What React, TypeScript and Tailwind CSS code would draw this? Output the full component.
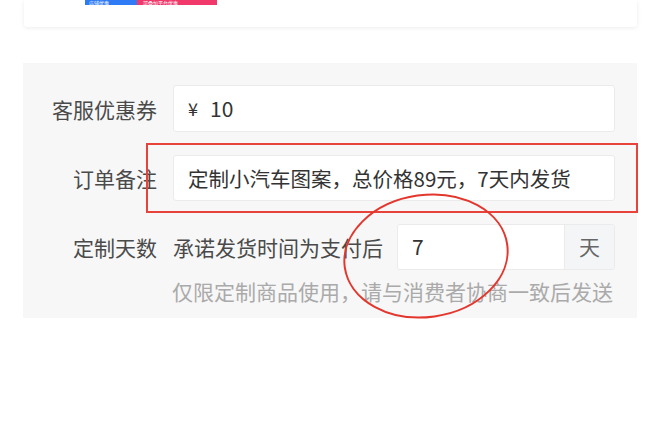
import React from 'react';

const font = { fontFamily: '"Noto Sans CJK SC", "Noto Sans", sans-serif' };

function Field({ label, children }: { label: string; children: React.ReactNode }) {
	return (
		<div className="flex items-center">
			<div className="w-[134px] shrink-0 text-right text-[21px] leading-[28px] text-[#4a4a4a]">{label}</div>
			<div className="ml-[16px] flex-1">{children}</div>
		</div>
	);
}

export default function App() {
	return (
		<div className="relative h-[436px] w-[660px] overflow-hidden bg-white" style={font}>
			{/* top card, cut off by the screenshot */}
			<div className="mx-[24px] mr-[23px] flex h-[27px] items-start rounded-b-[3px] bg-white pl-[61px] shadow-[0_1px_4px_rgba(0,0,0,0.08)]">
				<div className="flex h-[5px] overflow-hidden text-[5px] leading-[5px] text-white">
					<span className="w-[52px] bg-[#2f7bf5] pl-[4px]">店铺优惠</span>
					<span className="w-[80px] bg-[#f0386b] pl-[6px]">可叠加平台优惠</span>
				</div>
			</div>

			<div className="relative ml-[23px] mr-[23px] mt-[36px] flex flex-col bg-[#f7f7f7] pb-[13px] pt-[22px]">
				<div className="flex flex-col gap-[23px] pr-[22px]">
					<Field label="客服优惠券">
						<div className="flex h-[47px] items-center rounded-[3px] border border-[#ebebeb] bg-white px-[14px] text-[21px] text-[#333]">
							<span className="text-[18px]">¥</span>
							<span className="ml-[12px]">10</span>
						</div>
					</Field>
					<Field label="订单备注">
						<div className="flex h-[46px] items-center whitespace-nowrap rounded-[3px] border border-[#ebebeb] bg-white px-[14px] text-[20.5px] text-[#333]">
							定制小汽车图案，总价格89元，7天内发货
						</div>
					</Field>
					<Field label="定制天数">
						<div className="flex items-center">
							<span className="shrink-0 whitespace-nowrap text-[21px] leading-[28px] text-[#4a4a4a]">承诺发货时间为支付后</span>
							<div className="ml-[14px] flex h-[46px] w-[218px] shrink-0 overflow-hidden rounded-[3px] border border-[#ebebeb]">
								<div className="flex flex-1 items-center bg-white pl-[14px] text-[21px] text-[#333]">7</div>
								<div className="flex w-[50px] items-center justify-center border-l border-[#ebebeb] bg-[#f4f5f7] text-[21px] text-[#666]">
									天
								</div>
							</div>
						</div>
					</Field>
				</div>
				<div className="ml-[149px] mt-[7px] whitespace-nowrap text-[21px] leading-[28px] text-[#aaa]">仅限定制商品使用，请与消费者协商一致后发送</div>

				{/* red annotation box */}
				<div className="absolute left-[123px] top-[80px] h-[70px] w-[492px] border-2 border-[#e8433a]" />
			</div>

			{/* red hand-drawn ellipse */}
			<svg className="absolute left-0 top-0" width="660" height="436" viewBox="0 0 660 436">
				<ellipse cx="426" cy="256" rx="82" ry="61" transform="rotate(-8 426 256)" fill="none" stroke="#e3362d" strokeWidth="2" />
			</svg>
		</div>
	);
}
